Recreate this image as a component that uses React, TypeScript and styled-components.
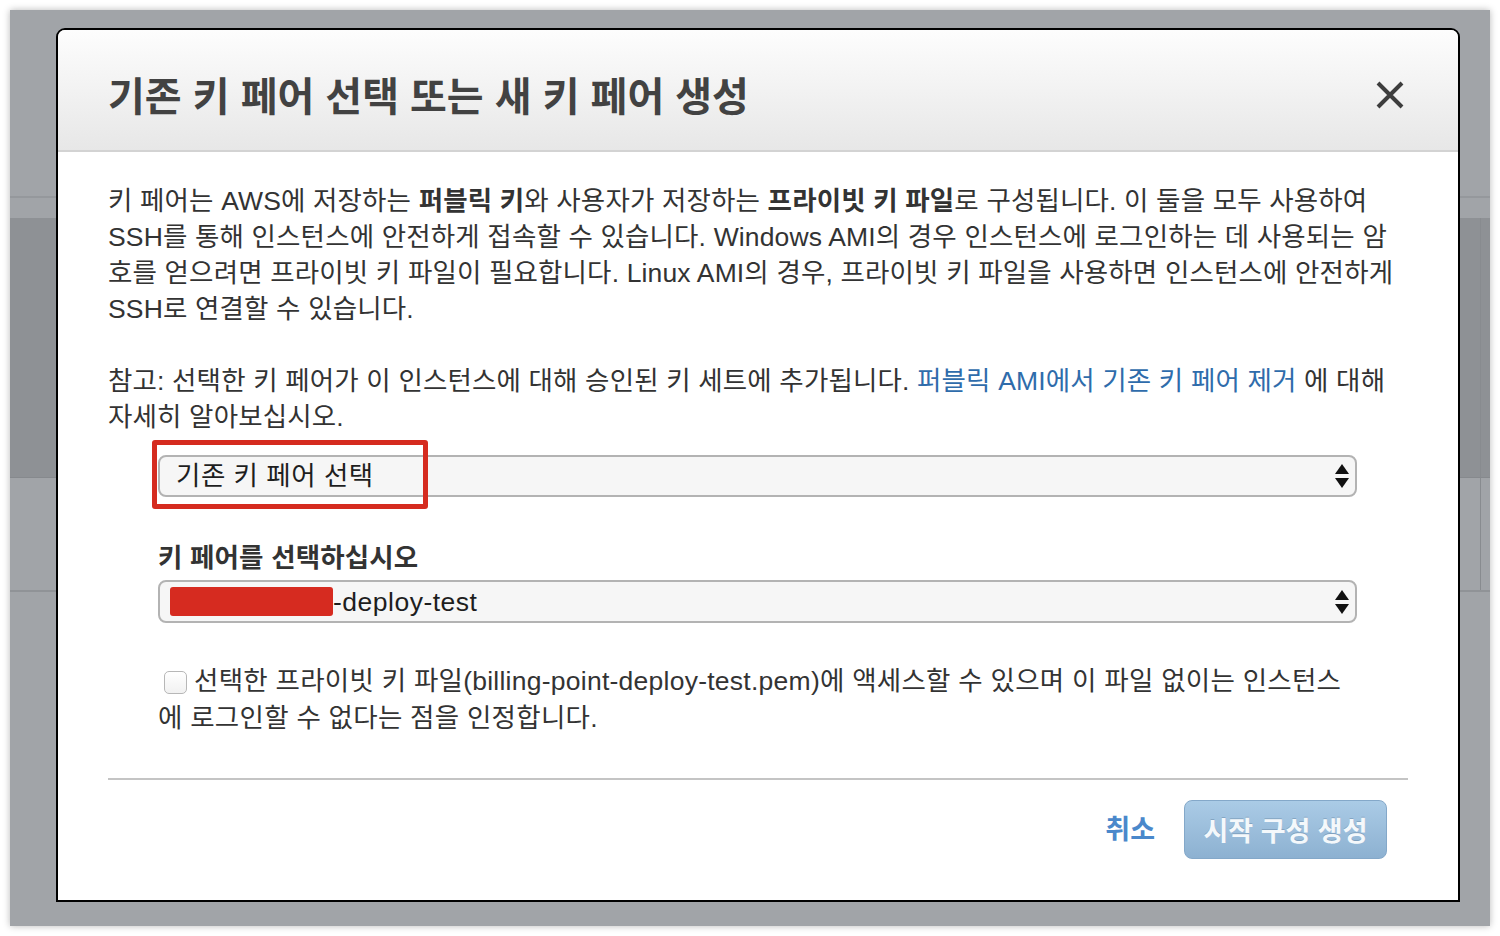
import React from "react";
import styled, { createGlobalStyle } from "styled-components";

const GlobalStyle = createGlobalStyle`
  html, body { margin: 0; padding: 0; background: #ffffff; }
  body { font-family: "Liberation Sans", "Noto Sans CJK KR", sans-serif; }
  * { box-sizing: border-box; }
`;

const Page = styled.div`
  width: 1500px;
  height: 936px;
  padding: 10px;
`;

const Screen = styled.div`
  position: relative;
  width: 1480px;
  height: 916px;
  background: #a1a4a8;
  box-shadow: 0 0 7px rgba(0, 0, 0, 0.28);
  display: flex;
  flex-direction: column;
  overflow: hidden;
`;

const Band = styled.div<{ $h?: number; $bg: string }>`
  display: flex;
  flex: ${(p) => (p.$h ? `0 0 ${p.$h}px` : "1 1 auto")};
  background: ${(p) => p.$bg};
`;

const BandMain = styled.div`
  flex: 1;
`;

const BandSide = styled.div`
  width: 10px;
  border-left: 1px solid #888b8f;
`;

const Modal = styled.div`
  position: absolute;
  top: 18px;
  left: 46px;
  width: 1404px;
  height: 874px;
  background: #ffffff;
  border: 2px solid #000000;
  border-radius: 9px 9px 0 0;
  display: flex;
  flex-direction: column;
  overflow: hidden;
`;

const Header = styled.div`
  height: 122px;
  flex: 0 0 122px;
  display: flex;
  align-items: center;
  justify-content: space-between;
  padding: 7px 53px 0 50px;
  background: linear-gradient(#fdfdfd, #e7e7e7);
  border-bottom: 2px solid #d3d3d3;
`;

const Title = styled.h1`
  margin: 0;
  font-size: 40px;
  font-weight: 700;
  color: #424242;
`;

const CloseButton = styled.button`
  width: 30px;
  height: 30px;
  padding: 0;
  margin-top: 3px;
  border: none;
  background: transparent;
  display: flex;
  align-items: center;
  justify-content: center;
`;

const Body = styled.div`
  padding: 31px 50px 0 50px;
  color: #333333;
  font-size: 26.5px;
  letter-spacing: 0.15px;
  line-height: 36px;
`;

const Paragraph = styled.p<{ $gap?: number }>`
  margin: 0 0 ${(p) => p.$gap ?? 0}px 0;
  white-space: nowrap;
`;

const Link = styled.a`
  color: #2f6cab;
  text-decoration: none;
`;

const FormGroup = styled.div`
  padding: 0 51px 0 50px;
`;

const SelectWrap = styled.div<{ $top: number }>`
  position: relative;
  margin-top: ${(p) => p.$top}px;
`;

const SelectBox = styled.div<{ $h: number }>`
  height: ${(p) => p.$h}px;
  border: 2px solid #b3b3b3;
  border-radius: 8px;
  background: #f6f6f6;
  display: flex;
  align-items: center;
  justify-content: space-between;
  padding: 0 5px 0 16px;
  font-size: 26.5px;
  letter-spacing: 0.5px;
  color: #1e1e1e;
`;

const SelectValue = styled.span`
  display: flex;
  align-items: center;
`;

const Redaction = styled.span`
  display: inline-block;
  width: 163px;
  height: 29px;
  background: #d62b20;
  border-radius: 3px;
  margin-left: -6px;
`;

const Highlight = styled.div`
  position: absolute;
  left: -6px;
  top: -15px;
  width: 276px;
  height: 69px;
  border: 5px solid #d52b1f;
  border-radius: 3px;
  pointer-events: none;
`;

const Label = styled.div`
  margin-top: 43px;
  font-size: 26.5px;
  font-weight: 700;
  color: #333333;
  line-height: 36px;
`;

const CheckRow = styled.div`
  margin-top: 40px;
  white-space: nowrap;
  line-height: 37px;
  letter-spacing: 0.25px;
`;

const CheckBox = styled.span`
  display: inline-block;
  width: 23px;
  height: 23px;
  margin: 0 7px 0 6px;
  vertical-align: -4px;
  border: 1.5px solid #b7b7b7;
  border-radius: 5px;
  background: linear-gradient(#ffffff, #f1f1f1);
`;

const Divider = styled.hr`
  margin: 41px 0 0 0;
  border: none;
  height: 2px;
  background: #c4c4c4;
`;

const Footer = styled.div`
  margin-top: 20px;
  display: flex;
  justify-content: flex-end;
  align-items: center;
  gap: 29px;
  padding-right: 21px;
`;

const CancelLink = styled.a`
  font-size: 27px;
  font-weight: 700;
  letter-spacing: 0;
  color: #4a88cb;
`;

const PrimaryButton = styled.button`
  width: 203px;
  height: 59px;
  border: 1.5px solid #84a8c9;
  border-radius: 8px;
  background: linear-gradient(#aacbe6, #8db1d1);
  color: #f4f8fb;
  font-family: "Liberation Sans", "Noto Sans CJK KR", sans-serif;
  font-size: 27px;
  font-weight: 700;
  text-shadow: 0 -1px 0 rgba(80, 110, 140, 0.35);
`;

const Arrows = () => (
  <svg width="16" height="26" viewBox="0 0 16 26">
    <polygon points="8,1 15,11 1,11" fill="#111" />
    <polygon points="1,15 15,15 8,25" fill="#111" />
  </svg>
);

const CloseIcon = () => (
  <svg width="28" height="28" viewBox="0 0 28 28">
    <path d="M2 2 L26 26 M26 2 L2 26" stroke="#3d3d3d" strokeWidth="4" />
  </svg>
);

export default function App() {
  return (
    <Page>
      <GlobalStyle />
      <Screen>
        <Band $h={186} $bg="#a1a4a8" />
        <Band $h={2} $bg="#95989c" />
        <Band $h={20} $bg="#a1a4a8" />
        <Band $h={259} $bg="#8e9195">
          <BandMain />
          <BandSide />
        </Band>
        <Band $h={1} $bg="#86898d" />
        <Band $h={112} $bg="#a1a4a8">
          <BandMain />
          <BandSide />
        </Band>
        <Band $h={2} $bg="#909397" />
        <Band $bg="#a1a4a8" />
        <Modal>
          <Header>
            <Title>기존 키 페어 선택 또는 새 키 페어 생성</Title>
            <CloseButton aria-label="닫기">
              <CloseIcon />
            </CloseButton>
          </Header>
          <Body>
            <Paragraph $gap={36}>
              키 페어는 AWS에 저장하는 <b>퍼블릭 키</b>와 사용자가 저장하는 <b>프라이빗 키 파일</b>로 구성됩니다. 이 둘을 모두 사용하여
              <br />
              SSH를 통해 인스턴스에 안전하게 접속할 수 있습니다. Windows AMI의 경우 인스턴스에 로그인하는 데 사용되는 암
              <br />
              호를 얻으려면 프라이빗 키 파일이 필요합니다. Linux AMI의 경우, 프라이빗 키 파일을 사용하면 인스턴스에 안전하게
              <br />
              SSH로 연결할 수 있습니다.
            </Paragraph>
            <Paragraph>
              참고: 선택한 키 페어가 이 인스턴스에 대해 승인된 키 세트에 추가됩니다. <Link href="#">퍼블릭 AMI에서 기존 키 페어 제거</Link> 에 대해
              <br />
              자세히 알아보십시오.
            </Paragraph>
            <FormGroup>
              <SelectWrap $top={20}>
                <SelectBox $h={42}>
                  <SelectValue>기존 키 페어 선택</SelectValue>
                  <Arrows />
                </SelectBox>
                <Highlight />
              </SelectWrap>
              <Label>키 페어를 선택하십시오</Label>
              <SelectWrap $top={4}>
                <SelectBox $h={43}>
                  <SelectValue>
                    <Redaction />
                    -deploy-test
                  </SelectValue>
                  <Arrows />
                </SelectBox>
              </SelectWrap>
              <CheckRow>
                <CheckBox />
                선택한 프라이빗 키 파일(billing-point-deploy-test.pem)에 액세스할 수 있으며 이 파일 없이는 인스턴스
                <br />
                에 로그인할 수 없다는 점을 인정합니다.
              </CheckRow>
            </FormGroup>
            <Divider />
            <Footer>
              <CancelLink>취소</CancelLink>
              <PrimaryButton>시작 구성 생성</PrimaryButton>
            </Footer>
          </Body>
        </Modal>
      </Screen>
    </Page>
  );
}
